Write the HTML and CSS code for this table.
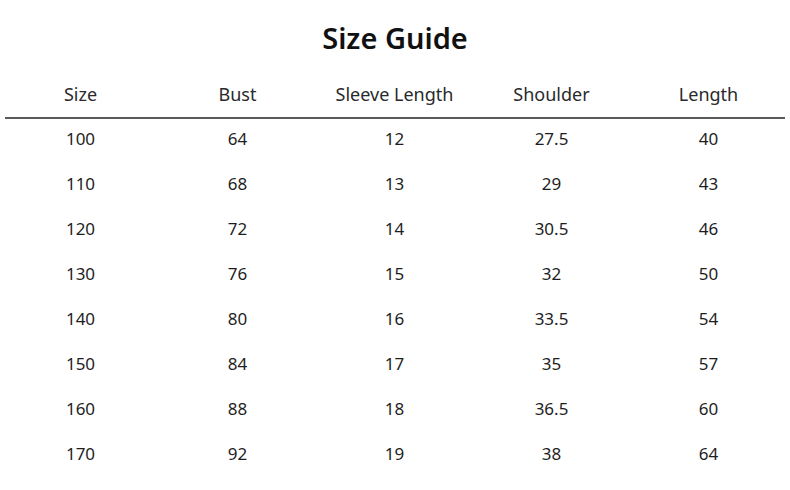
FILE: index.html
```html
<!DOCTYPE html>
<html>
<head>
<meta charset="utf-8">
<link rel="stylesheet" href="styles.css">
</head>
<body>
<div class="page">
  <h1 class="title">Size Guide</h1>
  <div class="table">
    <div class="row head">
      <div>Size</div><div>Bust</div><div>Sleeve Length</div><div>Shoulder</div><div>Length</div>
    </div>
    <div class="rule"></div>
    <div class="row"><div>100</div><div>64</div><div>12</div><div>27.5</div><div>40</div></div>
    <div class="row"><div>110</div><div>68</div><div>13</div><div>29</div><div>43</div></div>
    <div class="row"><div>120</div><div>72</div><div>14</div><div>30.5</div><div>46</div></div>
    <div class="row"><div>130</div><div>76</div><div>15</div><div>32</div><div>50</div></div>
    <div class="row"><div>140</div><div>80</div><div>16</div><div>33.5</div><div>54</div></div>
    <div class="row"><div>150</div><div>84</div><div>17</div><div>35</div><div>57</div></div>
    <div class="row"><div>160</div><div>88</div><div>18</div><div>36.5</div><div>60</div></div>
    <div class="row"><div>170</div><div>92</div><div>19</div><div>38</div><div>64</div></div>
  </div>
</div>
</body>
</html>
```
FILE: styles.css
```css
html, body {
  margin: 0;
  padding: 0;
  background: #fff;
}
.page {
  width: 790px;
  height: 490px;
  font-family: "Noto Sans", "Open Sans", sans-serif;
  color: #1e1e1e;
}
.title {
  margin: 0;
  padding-top: 18px;
  height: 40px;
  line-height: 40px;
  text-align: center;
  font-size: 29px;
  font-weight: 600;
  color: #111;
}
.table {
  width: 785px;
  margin-left: 2px;
  padding-top: 23px;
}
.row {
  display: grid;
  grid-template-columns: repeat(5, 1fr);
  height: 45px;
  line-height: 40px;
  font-size: 17px;
  text-align: center;
}
.row.head {
  height: 26px;
  line-height: 26px;
  font-size: 18px;
  color: #2a2a2a;
}
.rule {
  height: 2px;
  background: #5a5a5a;
  margin: 10px 2px 0 3px;
}
```
